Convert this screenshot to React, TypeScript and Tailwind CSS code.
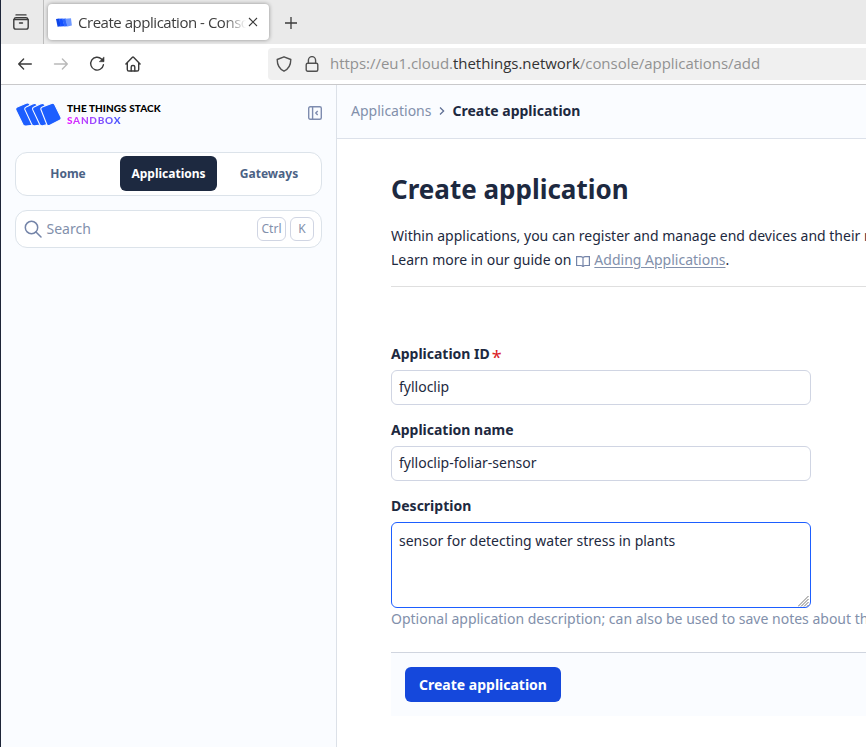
import React from "react";

function BrowserTabs() {
  return (
    <div className="flex h-11 bg-[#eaeaea] font-['Open_Sans','Noto_Sans',sans-serif] text-[#3d3d3d]">
      <div className="flex w-[43px] shrink-0 items-center justify-center border-r border-[#bdbdbd] pr-[3px]">
        <svg width="16" height="16" viewBox="0 0 16 16" fill="none" stroke="#3b3b3b" strokeWidth="1.4" strokeLinecap="round">
          <path d="M3 .9h10" />
          <path d="M1 5.4Q1.4 3.7 3 3.7h10q1.6 0 2 1.7M.8 5.6h14.4v7.3q0 2.2-2.2 2.2H3q-2.2 0-2.2-2.2zM6.5 9h3" />
        </svg>
      </div>
      <div className="ml-1 mt-1 flex h-9 w-[221px] shrink-0 items-center rounded bg-white pl-2 shadow-[0_0_4px_rgba(0,0,0,0.4)]">
        <svg width="16" height="9" viewBox="0 0 16 9" className="shrink-0">
          <path d="M0 1L3.2.6l1.8 7.6-3.4.5z" fill="#0d45e8" />
          <path d="M3 .8L6.5.5l2 7.7-4 .3z" fill="#1450ff" />
          <path d="M6.2.8L9.8.4l1.8 7.8-3.3.3z" fill="#2d66ff" />
          <path d="M9.2.7L15 .3l.9 7.1-4.6 1z" fill="#6e98ff" />
        </svg>
        <span className="ml-[6px] w-[168px] shrink-0 overflow-hidden whitespace-nowrap text-[15px] leading-5 tracking-[-0.47px] [mask-image:linear-gradient(to_right,black_146px,transparent_168px)]">
          Create application - Console
        </span>
        <svg width="10" height="10" viewBox="0 0 10 10" className="ml-[2px] shrink-0" stroke="#3b3b3b" strokeWidth="1.1">
          <path d="M1 1l8 8M9 1L1 9" />
        </svg>
      </div>
      <svg width="12" height="12" viewBox="0 0 12 12" className="ml-4 mt-[17px]" stroke="#3b3b3b" strokeWidth="1.3">
        <path d="M6 0v12M0 6h12" />
      </svg>
    </div>
  );
}

function BrowserToolbar() {
  return (
    <div className="flex h-[41px] items-center border-b border-[#c9c9cb] bg-white">
      <div className="ml-4 flex h-4 w-[251px] items-center gap-5">
        <svg width="16" height="16" viewBox="0 0 16 16" fill="none" stroke="#3b3b3b" strokeWidth="1.4" strokeLinecap="round" strokeLinejoin="round">
          <path d="M14.3 8H1.7M6.6 3.1L1.7 8l4.9 4.9" />
        </svg>
        <svg width="16" height="16" viewBox="0 0 16 16" fill="none" stroke="#b9b9b9" strokeWidth="1.4" strokeLinecap="round" strokeLinejoin="round">
          <path d="M1.5 8h12.8M9.4 3.1L14.3 8l-4.9 4.9" />
        </svg>
        <svg width="16" height="16" viewBox="0 0 16 16" fill="none" stroke="#3b3b3b" strokeWidth="1.4" strokeLinecap="round" strokeLinejoin="round">
          <path d="M14.4 8.8A6.4 6.4 0 1 1 12.5 3l1.9 1.8" />
          <path d="M15 1.3v4.4h-4.4z" fill="#3b3b3b" strokeWidth=".6" />
        </svg>
        <svg width="16" height="16" viewBox="0 0 16 16" className="-ml-[0.5px]" fill="none" stroke="#3b3b3b" strokeWidth="1.4" strokeLinecap="round" strokeLinejoin="round">
          <path d="M.9 8L7.2 1.5q.8-.8 1.6 0L15.1 8M2.3 7v6.4q0 1.6 1.6 1.6h8.2q1.6 0 1.6-1.6V7" />
          <path d="M6.2 15v-4q0-1.5 1.5-1.5h.6q1.5 0 1.5 1.5v4" />
        </svg>
      </div>
      <div className="flex h-8 flex-1 items-center rounded-l bg-[#f0f0f0] pl-2">
        <svg width="16" height="16" viewBox="0 0 16 16" fill="none" stroke="#505050" strokeWidth="1.4" strokeLinejoin="round">
          <path d="M8 .8L1.2 3.5c0 5.2 1.9 9.3 6.8 11.7 4.9-2.4 6.8-6.5 6.8-11.7z" />
        </svg>
        <svg width="14" height="16" viewBox="0 0 14 16" className="ml-[13px]" fill="none" stroke="#505050" strokeWidth="1.4">
          <rect x="1.2" y="7.2" width="11.6" height="8" rx="1.5" />
          <path d="M3.4 7V4.2a3.6 3.6 0 0 1 7.2 0V7" />
        </svg>
        <span className="mb-0.5 ml-[11px] whitespace-nowrap font-['Open_Sans','Noto_Sans',sans-serif] text-[15px] leading-5 tracking-[-0.035px] text-[#929292]">
          https://eu1.cloud.<span className="text-[#333]">thethings.network</span>/console/applications/add
        </span>
      </div>
    </div>
  );
}

function StackLogo() {
  return (
    <svg width="46" height="23" viewBox="0 0 46 23" fill="#1d5eff" className="ml-px shrink-0">
      <g stroke="#fafcff" strokeWidth="1.1">
        <path d="M1.6 4.1L10.5.3q2.5-.9 3.6 1L22.6 19q.9 2-1.3 2.9L10.5 23q-2.2.3-3.2-1.6L.2 6.9Q-.5 5 1.6 4.1z" transform="translate(-.4 0)" />
        <path d="M10.2 4.1L16.5 1q3-1.6 4.3.8l7.6 16.7q1.2 2.6-1.4 3.2l-8.3 1.2q-2.1.2-3-1.6L9 6.9q-.8-2 1.2-2.8z" />
        <path d="M18 4.1L24.3 1q3-1.6 4.3.8l7 15.7q1.2 2.6-1.4 3.2l-7.6 2.2q-2.1.2-3-1.6L16.8 6.9q-.8-2 1.2-2.8z" />
        <path d="M26.3 4L35.5.5q2.3-.8 3.3 1.2l6 12.3q1 2.2-1.1 3.3l-9.8 5q-2.2 1.1-3.2-1.1L25.1 7q-.9-2.1 1.2-3z" />
      </g>
    </svg>
  );
}

function Sidebar() {
  return (
    <aside className="flex w-[336px] shrink-0 flex-col border-r border-[#dce1e8] bg-[#fafcff] pl-[14px] pr-[14px]">
      <div className="mt-[18px] flex h-[23px] items-center">
        <StackLogo />
        <div className="-mt-px ml-[5px] w-[95px] whitespace-nowrap font-['Lato',sans-serif] text-[10px] font-black leading-3">
          <div className="tracking-[0.08px] text-black">THE THINGS STACK</div>
          <div className="w-[55px] bg-linear-to-r from-[#e80cff] to-[#3454ff] bg-clip-text tracking-[0.75px] text-transparent">SANDBOX</div>
        </div>
        <svg width="14" height="14" viewBox="0 0 14 14" className="ml-auto mt-[-3px]" fill="none" stroke="#7e8caf" strokeWidth="1.4">
          <rect x=".7" y=".7" width="12.6" height="12.6" rx="1.5" />
          <path d="M4.6 1v12M9.7 5L7.8 7l1.9 2" />
        </svg>
      </div>
      <nav className="mt-[26px] flex h-[44px] items-center rounded-xl border border-[#dce3ea] bg-white pb-px text-[12px] font-bold text-[#4b6285]">
        <span className="w-[104px] text-center">Home</span>
        <span className="flex h-[35px] w-[97px] items-center justify-center rounded-md bg-[#1d2940] text-white">Applications</span>
        <span className="w-[104px] text-center">Gateways</span>
      </nav>
      <div className="mt-[14px] flex h-[38px] items-center rounded-xl border border-[#dce3ea] bg-white pl-2 pr-[7px] text-sm text-[#8290ab]">
        <svg width="18" height="18" viewBox="0 0 18 18" fill="none" stroke="#7484a8" strokeWidth="1.5" strokeLinecap="round">
          <circle cx="7.5" cy="7.5" r="6.2" />
          <path d="M12 12l5 5" />
        </svg>
        <span className="ml-[4.5px]">Search</span>
        <span className="ml-auto flex h-6 w-[29px] items-center justify-center rounded-md border border-[#d0d5e3] text-[12px]">Ctrl</span>
        <span className="ml-1 flex h-6 w-6 items-center justify-center rounded-md border border-[#d0d5e3] text-[12px]">K</span>
      </div>
    </aside>
  );
}

function Field({ label, value, required }: { label: string; value: string; required?: boolean }) {
  return (
    <div className="mb-[13px] h-[63px]">
      <div className="flex h-[28px] text-sm font-bold leading-6">
        {label}
        {required && <span className="ml-[2px] pt-[3px] text-lg font-normal leading-6 text-[#db2228]">*</span>}
      </div>
      <div className="flex h-[35px] w-[420px] items-center rounded-md border border-[#d0d5e3] px-[7px] pb-px text-sm">{value}</div>
    </div>
  );
}

function Main() {
  return (
    <main className="flex w-[900px] shrink-0 flex-col">
      <div className="flex h-[54px] items-center border-b border-[#dce1ea] bg-[#fafcff] pl-[14px] pb-px text-sm">
        <span className="text-[#8290ab]">Applications</span>
        <svg width="6" height="8" viewBox="0 0 6 8" className="ml-2 mr-[7px]" fill="none" stroke="#5f6f94" strokeWidth="1.3">
          <path d="M1 .5L4.6 4 1 7.5" />
        </svg>
        <span className="font-bold">Create application</span>
      </div>
      <div className="pl-[54px]">
        <h1 className="mt-[30px] h-[40px] text-[26px] font-bold leading-[40px]">Create application</h1>
        <div className="mt-[15px] h-[63px] whitespace-nowrap border-b border-[#dfdfdf] text-sm leading-6">
          <div>Within applications, you can register and manage end devices and their network data.</div>
          <div className="flex items-center">
            Learn more in our guide on
            <svg width="14" height="11" viewBox="0 0 14 11" className="ml-[5px] mr-1 mt-0.5" fill="none" stroke="#7484a8" strokeWidth="1.2">
              <path d="M7 1.7Q6 .7 4.7.7H.6v8.8h4.1Q6 9.5 7 10.5q1-1 2.3-1h4.1V.7H9.3Q8 .7 7 1.7zM7 1.7v8.8" />
            </svg>
            <span className="text-[#8290ab] underline underline-offset-2">Adding Applications</span>.
          </div>
        </div>
        <form className="mt-[55px]">
          <Field label="Application ID" value="fylloclip" required />
          <Field label="Application name" value="fylloclip-foliar-sensor" />
          <div className="h-[28px] text-sm font-bold leading-6">Description</div>
          <div className="relative h-[86px] w-[420px] rounded-md border border-[#1d5eff] px-[7px] pt-[7px] text-sm leading-[22px]">
            sensor for detecting water stress in plants
            <svg width="11" height="11" viewBox="0 0 11 11" className="absolute bottom-0 right-px" stroke="#777" strokeWidth="1">
              <path d="M0 10.5L10.5 0M3 10.5L10.5 3M6 10.5L10.5 6M9 10.5L10.5 9" />
            </svg>
          </div>
          <div className="whitespace-nowrap text-sm leading-[22px] text-[#8290ab]">
            Optional application description; can also be used to save notes about the application
          </div>
          <div className="mt-[22px] flex h-[64px] items-center border-t border-[#d0d5df] bg-[#fafcff] pb-px pl-[14px]">
            <button type="button" className="h-[35px] w-[156px] rounded-md bg-[#1548dc] pt-px text-sm font-bold text-white">
              Create application
            </button>
          </div>
        </form>
      </div>
    </main>
  );
}

export default function App() {
  return (
    <div className="h-[747px] w-[866px] overflow-hidden border-l border-[#1d2538] bg-white font-['Noto_Sans',sans-serif] text-[#1d2940]">
      <BrowserTabs />
      <BrowserToolbar />
      <div className="flex h-[662px]">
        <Sidebar />
        <Main />
      </div>
    </div>
  );
}
